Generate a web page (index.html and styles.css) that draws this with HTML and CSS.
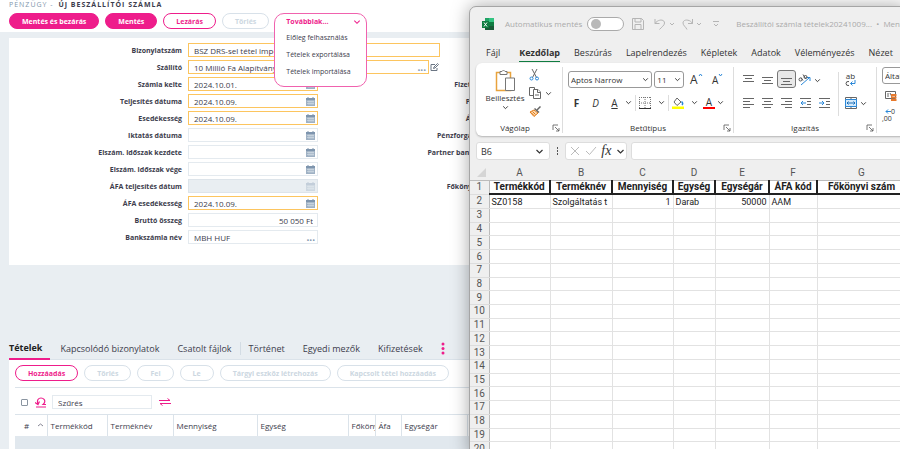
FILE: index.html
```html
<!DOCTYPE html>
<html lang="hu">
<head>
  <meta charset="UTF-8">
  <meta name="viewport" content="width=device-width, initial-scale=1.0">
  <title>Új beszállítói számla</title>
  <link rel="stylesheet" href="styles.css">
</head>
<body>
  <svg class="sprite" aria-hidden="true">
    <symbol id="cal" viewBox="0 0 9 9"><path d="M0 1h9v8H0z" fill="#9fb1c4"/><path d="M0 1h9v2H0z" fill="#7e95ae"/><path d="M2 0v2M7 0v2" stroke="#7e95ae"/><path d="M1 4.500h7M1 6.500h7M3 3.500V8M5 3.500V8M7 3.500V8" stroke="#dfe6ed" stroke-width=".5"/></symbol>
    <symbol id="chev" viewBox="0 0 6 6"><path d="M1 2l2 2 2-2" fill="none" stroke="currentColor" stroke-width=".8"/></symbol>
    <symbol id="launch" viewBox="0 0 8 8"><path d="M1 6V1h5M3 3l4 4M7 4v3H4" fill="none" stroke="#555" stroke-width=".8"/></symbol>
  </svg>

  <main class="erp">
    <header class="erp-header">
      <h1><span>PÉNZÜGY -</span> ÚJ BESZÁLLÍTÓI SZÁMLA</h1>
      <div class="actions">
        <button class="btn solid">Mentés és bezárás</button>
        <button class="btn solid">Mentés</button>
        <button class="btn">Lezárás</button>
        <button class="btn" disabled>Törlés</button>
        <div class="more">
          <div class="more-box">
            <button class="more-toggle">Továbbiak... <svg width="8" height="8"><use href="#chev"/></svg></button>
            <button>Előleg felhasználás</button>
            <button>Tételek exportálása</button>
            <button>Tételek importálása</button>
          </div>
        </div>
      </div>
    </header>

    <form class="card">
      <div class="fields">
        <div class="row"><label for="biz">Bizonylatszám</label><div class="box req wide"><input id="biz" value="BSZ DRS-sel tétel importálás"></div></div>
        <div class="row"><label for="szall">Szállító</label><div class="box req partner"><input id="szall" value="10 Millió Fa Alapítvány"><b class="dots">...</b></div>
          <svg class="edit" width="9" height="9" viewBox="0 0 9 9" fill="none" stroke="#6b7684"><path d="M5 1.500H1v6h6V5"/><path d="M3.500 5.500l.5-1.500L7.500.5l1 1L5 5z"/></svg></div>
        <div class="row"><label for="kelt">Számla kelte</label><div class="box req"><input id="kelt" value="2024.10.01."><svg width="9" height="9"><use href="#cal"/></svg></div></div>
        <div class="row"><label for="telj">Teljesítés dátuma</label><div class="box req"><input id="telj" value="2024.10.09."><svg width="9" height="9"><use href="#cal"/></svg></div></div>
        <div class="row"><label for="esed">Esedékesség</label><div class="box req"><input id="esed" value="2024.10.09."><svg width="9" height="9"><use href="#cal"/></svg></div></div>
        <div class="row"><label for="ikt">Iktatás dátuma</label><div class="box"><input id="ikt"><svg width="9" height="9"><use href="#cal"/></svg></div></div>
        <div class="row"><label for="kezd">Elszám. időszak kezdete</label><div class="box"><input id="kezd"><svg width="9" height="9"><use href="#cal"/></svg></div></div>
        <div class="row"><label for="vege">Elszám. időszak vége</label><div class="box"><input id="vege"><svg width="9" height="9"><use href="#cal"/></svg></div></div>
        <div class="row"><label for="afat">ÁFA teljesítés dátum</label><div class="box off"><input id="afat" disabled><svg width="9" height="9"><use href="#cal"/></svg></div></div>
        <div class="row"><label for="afae">ÁFA esedékesség</label><div class="box req"><input id="afae" value="2024.10.09."><svg width="9" height="9"><use href="#cal"/></svg></div></div>
        <div class="row"><label for="brutto">Bruttó összeg</label><div class="box"><input id="brutto" class="num" value="50 050 Ft"></div></div>
        <div class="row"><label for="bank">Bankszámla név</label><div class="box"><input id="bank" value="MBH HUF"><b class="dots">...</b></div></div>
      </div>
      <div class="fields second">
        <div class="row"></div>
        <div class="row"></div>
        <div class="row"><label for="fiz">Fizetési mód</label><div class="box"><input id="fiz"></div></div>
        <div class="row"><label for="penz">Pénznem</label><div class="box"><input id="penz"></div></div>
        <div class="row"><label for="arf">Árfolyam</label><div class="box"><input id="arf"></div></div>
        <div class="row"><label for="pforg">Pénzforgalmi kód</label><div class="box"><input id="pforg"></div></div>
        <div class="row"><label for="pbank">Partner bankszámla</label><div class="box"><input id="pbank"></div></div>
        <div class="row"></div>
        <div class="row"><label for="fok">Főkönyvi szám</label><div class="box"><input id="fok"></div></div>
      </div>
    </form>

    <nav class="tabs">
      <a href="#" class="active">Tételek</a>
      <a href="#">Kapcsolódó bizonylatok</a>
      <a href="#">Csatolt fájlok</a>
      <i class="sep"></i>
      <a href="#">Történet</a>
      <a href="#">Egyedi mezők</a>
      <a href="#">Kifizetések</a>
      <svg width="4" height="13" viewBox="0 0 4 13" fill="#ee1d8b"><circle cx="2" cy="2" r="1.500"/><circle cx="2" cy="6.500" r="1.500"/><circle cx="2" cy="11" r="1.500"/></svg>
    </nav>

    <section class="panel">
      <div class="panel-bar">
        <button class="btn">Hozzáadás</button>
        <button class="btn" disabled>Törlés</button>
        <button class="btn" disabled>Fel</button>
        <button class="btn" disabled>Le</button>
        <button class="btn" disabled>Tárgyi eszköz létrehozás</button>
        <button class="btn" disabled>Kapcsolt tétel hozzáadás</button>
      </div>
      <div class="filter">
        <input type="checkbox" aria-label="Összes kijelölése">
        <svg width="12" height="11" viewBox="0 0 12 11" fill="none" stroke="#ee1d8b" stroke-width="1.200"><path d="M3 7C1.500 3 3.500 1 6 1s4.500 2 3.500 4.500c-.3 1-1 1.500-1.500 2h3M0 5.500l3 2 1.500-3M1 10h10"/></svg>
        <input type="text" aria-label="Szűrés" value="Szűrés">
        <svg class="swap" width="12" height="8" viewBox="0 0 12 8" fill="none" stroke="#ee1d8b"><path d="M0 2.500h11L8.500.5M12 5.500H1l2.500 2"/></svg>
      </div>
      <table class="items">
        <colgroup><col class="i-no"><col class="i-code"><col class="i-name"><col class="i-qty"><col class="i-unit"><col class="i-acc"><col class="i-vat"><col class="i-price"><col></colgroup>
        <thead>
          <tr><th><span># <svg width="7" height="7" viewBox="0 0 7 7"><path d="M1 4l2.500-2L6 4" fill="none" stroke="#667" stroke-width=".8"/></svg></span></th><th>Termékkód</th><th>Terméknév</th><th>Mennyiség</th><th>Egység</th><th>Főköny</th><th>Áfa</th><th>Egységár</th><th></th></tr>
        </thead>
        <tbody><tr><td colspan="9"></td></tr></tbody>
      </table>
    </section>
  </main>

  <section class="excel">
    <header class="titlebar">
      <svg width="12" height="12" viewBox="0 0 12 12"><path d="M3 0h9v12H3z" fill="#21a366"/><path d="M7 0h5v4H7z" fill="#33c481"/><path d="M3 6h9v6H3z" fill="#185c37"/><path d="M7 4h5v4H7z" fill="#107c41"/><path d="M0 3h7v7H0z" fill="#107c41"/><path d="M2 4.500l3 4M5 4.500l-3 4" stroke="#fff"/></svg>
      <label for="autosave">Automatikus mentés</label>
      <input type="checkbox" class="switch" id="autosave">
      <svg class="save" width="12" height="12" viewBox="0 0 12 12" fill="none" stroke="#b5b5b5"><path d="M.5.5h9l2 2v9H.5zM3 .5V4h6V.5M3 11.500v-5h6v5"/></svg>
      <svg class="undo" width="20" height="12" viewBox="0 0 20 12" fill="none" stroke="#b5b5b5"><path d="M1 1v4.500h4.500M1 5.500C4 1 10.500 1 10.500 5c0 2.500-3 4-5 6.500M16 5l2 2 2-2"/></svg>
      <svg class="redo" width="20" height="12" viewBox="0 0 20 12" fill="none" stroke="#b5b5b5"><path d="M10.500 1v4.500H6M10.500 5.500C8 1 1 1 1 5c0 2.500 3 4 4 6.500M15 5l2 2 2-2"/></svg>
      <svg class="qat" width="6" height="7" viewBox="0 0 6 7" fill="none" stroke="#b5b5b5"><path d="M0 1.500h6M1 4l2 2 2-2"/></svg>
      <p>Beszállítói számla tételek20241009... &nbsp;• &nbsp;Mentve</p>
    </header>

    <nav class="menu">
      <a href="#">Fájl</a>
      <a href="#" class="active">Kezdőlap</a>
      <a href="#">Beszúrás</a>
      <a href="#">Lapelrendezés</a>
      <a href="#">Képletek</a>
      <a href="#">Adatok</a>
      <a href="#">Véleményezés</a>
      <a href="#">Nézet</a>
    </nav>

    <div class="ribbon">
      <div class="group clipboard">
        <div class="tools">
          <button class="paste">
            <svg width="21" height="23" viewBox="0 0 21 23"><path d="M1.500 3.500h14v18h-14z" fill="#fff" stroke="#e8a33d" stroke-width="1.500"/><path d="M5 2.500h2q1.500-3 3 0h2v3H5z" fill="#fff" stroke="#777"/><path d="M10.500 9h9v12.500h-9z" fill="#fff" stroke="#777"/></svg>
            Beillesztés
            <svg width="7" height="7"><use href="#chev"/></svg>
          </button>
          <div class="stack">
            <button aria-label="Kivágás"><svg width="11" height="12" viewBox="0 0 11 12" fill="none"><path d="M3 0l4.500 8.500M8 0L3.500 8.500" stroke="#666"/><circle cx="2.500" cy="9.500" r="1.500" stroke="#2b88d8"/><circle cx="8" cy="9.500" r="1.500" stroke="#2b88d8"/></svg></button>
            <button aria-label="Másolás"><svg width="12" height="12" viewBox="0 0 12 12" fill="#fff" stroke="#666"><path d="M4.500 8.500h-4v-8h5v2"/><path d="M4.500 2.500H9l2.500 2.500v6.500h-7z"/><path d="M8.500 2.500v3h3M6 8h4"/></svg><svg width="7" height="7"><use href="#chev"/></svg></button>
            <button aria-label="Formátummásoló"><svg width="12" height="11" viewBox="0 0 12 11"><path d="M11.500.5L8 4" stroke="#666" stroke-width="1.500"/><path d="M1 6l4-2 4 3-4 3.500z" fill="#fbd9b0" stroke="#e07b1a"/><path d="M2 6.500l3 3M3.500 5.500l3 3" stroke="#e07b1a"/><path d="M5.500 2.500l4.500 4" stroke="#666" stroke-width="1.500"/></svg></button>
          </div>
        </div>
        <footer>Vágólap<svg width="8" height="8"><use href="#launch"/></svg></footer>
      </div>

      <div class="group font">
        <div class="tools lines">
          <div class="line">
            <span class="combo"><select aria-label="Betűtípus"><option>Aptos Narrow</option></select><svg width="7" height="7"><use href="#chev"/></svg></span>
            <span class="combo size"><select aria-label="Betűméret"><option>11</option></select><svg width="7" height="7"><use href="#chev"/></svg></span>
            <button class="grow">A<svg width="5" height="10" viewBox="0 0 5 10"><path d="M1 3l1.500-2L4 3" fill="none" stroke="#2b88d8"/></svg></button>
            <button class="shrink">A<svg width="5" height="10" viewBox="0 0 5 10"><path d="M1 1l1.500 2L4 1" fill="none" stroke="#2b88d8"/></svg></button>
          </div>
          <div class="line styles">
            <button><b>F</b></button>
            <button><i>D</i></button>
            <button><u>A</u></button>
            <svg width="7" height="7"><use href="#chev"/></svg>
            <span class="vr"></span>
            <button aria-label="Szegélyek"><svg width="12" height="12" viewBox="0 0 12 12" fill="none" stroke="#777"><path d="M.5 0v11M11.500 0v11M6 0v11M0 .5h12M0 6h12" stroke-dasharray="1 1"/><path d="M0 11.500h12" stroke="#333"/></svg></button>
            <svg width="7" height="7"><use href="#chev"/></svg>
            <span class="vr"></span>
            <button aria-label="Kitöltőszín"><svg width="12" height="12" viewBox="0 0 12 12"><path d="M5 1l4 4-4 3.500L2 5z" fill="#fff" stroke="#666"/><path d="M9.500 4.500q2 2 .5 3.500" fill="none" stroke="#2b88d8" stroke-width="1.500"/><path d="M0 9.500h12V12H0z" fill="#ff0"/></svg></button>
            <svg width="7" height="7"><use href="#chev"/></svg>
            <button class="color">A</button>
            <svg width="7" height="7"><use href="#chev"/></svg>
          </div>
        </div>
        <footer>Betűtípus<svg width="8" height="8"><use href="#launch"/></svg></footer>
      </div>

      <div class="group align">
        <div class="tools">
          <div class="al-grid">
            <button aria-label="Felülre"><svg width="11" height="12" viewBox="0 0 11 12" stroke="#666"><path d="M0 1.500h11M2 4.500h7M0 7.500h11"/></svg></button>
            <button aria-label="Középre"><svg width="11" height="12" viewBox="0 0 11 12" stroke="#666"><path d="M0 3.500h11M2 6.500h7M0 9.500h11"/></svg></button>
            <button aria-label="Alulra" class="on"><svg width="11" height="12" viewBox="0 0 11 12" stroke="#666"><path d="M0 5.500h11M2 8.500h7M0 11.500h11"/></svg></button>
            <button aria-label="Tájolás" class="orient"><svg width="13" height="12" viewBox="0 0 13 12" fill="none"><path d="M3 11l8-7M8.500 3.500H12V7" stroke="#2b88d8"/><circle cx="2.500" cy="5.500" r="1.500" stroke="#555"/><path d="M3 3.500l2 3M5 .5l3 4.500" stroke="#555"/><circle cx="7.500" cy="3" r="1.500" stroke="#555"/></svg><svg width="7" height="7"><use href="#chev"/></svg></button>
            <span></span>
            <button aria-label="Balra"><svg width="11" height="12" viewBox="0 0 11 12" stroke="#666"><path d="M0 1.500h11M0 4.500h7M0 7.500h11M0 10.500h7"/></svg></button>
            <button aria-label="Középre igazítás"><svg width="11" height="12" viewBox="0 0 11 12" stroke="#666"><path d="M0 1.500h11M2 4.500h7M0 7.500h11M2 10.500h7"/></svg></button>
            <button aria-label="Jobbra"><svg width="11" height="12" viewBox="0 0 11 12" stroke="#666"><path d="M0 1.500h11M4 4.500h7M0 7.500h11M4 10.500h7"/></svg></button>
            <button aria-label="Behúzás csökkentése"><svg width="11" height="12" viewBox="0 0 11 12" fill="none" stroke="#666"><path d="M0 1.500h11M7 4.500h4M7 7.500h4M0 10.500h11"/><path d="M6 6H1M3 4L1 6l2 2" stroke="#2b88d8"/></svg></button>
            <button aria-label="Behúzás növelése"><svg width="11" height="12" viewBox="0 0 11 12" fill="none" stroke="#666"><path d="M0 1.500h11M7 4.500h4M7 7.500h4M0 10.500h11"/><path d="M0 6h5M3 4l2 2-2 2" stroke="#2b88d8"/></svg></button>
          </div>
          <span class="vr tall"></span>
          <div class="wrap">
            <button aria-label="Sortöréssel több sorba">ab<svg width="11" height="7" viewBox="0 0 11 7" fill="none"><path d="M4 1.500Q1 1 1 3.500T4 5.500" stroke="#555"/><path d="M10 0v3.500H5.500M7.500 1.500l-2 2 2 2" stroke="#2b88d8"/></svg></button>
            <button aria-label="Cellaegyesítés" class="merge"><svg width="12" height="12" viewBox="0 0 12 12" fill="none" stroke="#666"><path d="M.5.5h11v11H.5zM6 0v2.500M6 9.500V12"/><path d="M.5 2.500h11v7H.5z" fill="#d6eafa" stroke="#2b88d8"/><path d="M2 6h8M3.500 4.500L2 6l1.500 1.500M8.500 4.500L10 6 8.500 7.500" stroke="#1b6fb8"/></svg><svg width="7" height="7"><use href="#chev"/></svg></button>
          </div>
        </div>
        <footer>Igazítás<svg width="8" height="8"><use href="#launch"/></svg></footer>
      </div>

      <div class="group number">
        <select aria-label="Számformátum"><option>Általános</option></select>
        <svg width="12" height="12" viewBox="0 0 12 12" fill="none" stroke="#666"><path d="M.5 1.500h10v7H.5zM3 3v4M5 3l2 4"/><path d="M6 5h5.500M6 7.500h5.500M6 10h5.500" stroke="#e8792b" stroke-width="2"/></svg>
        <span class="dec"><svg width="6" height="5" viewBox="0 0 6 5" fill="none" stroke="#2b88d8"><path d="M6 2.500H1M3 .5l-2 2 2 2"/></svg>0<br>,00</span>
      </div>
    </div>

    <div class="formula">
      <span class="combo name"><input aria-label="Név mező" value="B6"><svg width="9" height="9"><use href="#chev"/></svg></span>
      <svg width="3" height="9" viewBox="0 0 3 9" fill="#555"><path d="M1 0h1v2H1zM1 3h1v2H1zM1 6h1v2H1z"/></svg>
      <div class="fx">
        <svg width="10" height="10" viewBox="0 0 10 10" stroke="#bbb"><path d="M1 1l8 8M9 1L1 9"/></svg>
        <svg width="12" height="10" viewBox="0 0 12 10" fill="none" stroke="#bbb"><path d="M1 5l3.500 3.500L11 1"/></svg>
        <em>fx</em>
        <svg width="9" height="9"><use href="#chev"/></svg>
      </div>
      <input class="fbar" aria-label="Szerkesztőléc">
    </div>

    <table class="sheet">
      <colgroup><col class="c-row"><col class="c-a"><col class="c-b"><col class="c-a"><col class="c-d"><col class="c-e"><col class="c-f"><col></colgroup>
      <thead>
        <tr><th><svg width="9" height="9" viewBox="0 0 9 9"><path d="M9 0v9H0z" fill="#d5d5d5"/></svg></th><th>A</th><th>B</th><th>C</th><th>D</th><th>E</th><th>F</th><th>G</th></tr>
      </thead>
      <tbody>
        <tr class="heads"><th>1</th><td>Termékkód</td><td>Terméknév</td><td>Mennyiség</td><td>Egység</td><td>Egységár</td><td>ÁFA kód</td><td>Főkönyvi szám</td></tr>
        <tr><th>2</th><td>SZ0158</td><td>Szolgáltatás t</td><td class="num">1</td><td>Darab</td><td class="num">50000</td><td>AAM</td><td></td></tr>
        <tr><th>3</th><td></td><td></td><td></td><td></td><td></td><td></td><td></td></tr>
        <tr><th>4</th><td></td><td></td><td></td><td></td><td></td><td></td><td></td></tr>
        <tr><th>5</th><td></td><td></td><td></td><td></td><td></td><td></td><td></td></tr>
        <tr><th>6</th><td></td><td></td><td></td><td></td><td></td><td></td><td></td></tr>
        <tr><th>7</th><td></td><td></td><td></td><td></td><td></td><td></td><td></td></tr>
        <tr><th>8</th><td></td><td></td><td></td><td></td><td></td><td></td><td></td></tr>
        <tr><th>9</th><td></td><td></td><td></td><td></td><td></td><td></td><td></td></tr>
        <tr><th>10</th><td></td><td></td><td></td><td></td><td></td><td></td><td></td></tr>
        <tr><th>11</th><td></td><td></td><td></td><td></td><td></td><td></td><td></td></tr>
        <tr><th>12</th><td></td><td></td><td></td><td></td><td></td><td></td><td></td></tr>
        <tr><th>13</th><td></td><td></td><td></td><td></td><td></td><td></td><td></td></tr>
        <tr><th>14</th><td></td><td></td><td></td><td></td><td></td><td></td><td></td></tr>
        <tr><th>15</th><td></td><td></td><td></td><td></td><td></td><td></td><td></td></tr>
        <tr><th>16</th><td></td><td></td><td></td><td></td><td></td><td></td><td></td></tr>
        <tr><th>17</th><td></td><td></td><td></td><td></td><td></td><td></td><td></td></tr>
        <tr><th>18</th><td></td><td></td><td></td><td></td><td></td><td></td><td></td></tr>
        <tr><th>19</th><td></td><td></td><td></td><td></td><td></td><td></td><td></td></tr>
        <tr><th>20</th><td></td><td></td><td></td><td></td><td></td><td></td><td></td></tr>
      </tbody>
    </table>
  </section>
</body>
</html>
```

FILE: styles.css
```css
* {
  box-sizing: border-box;
}

body {
  margin: 0;
  height: 100vh;
  overflow: hidden;
  position: relative;
  background: #e9eef2;
  color: #3c3c4c;
  font-family: "Open Sans", "Noto Sans", sans-serif;
  font-size: 7px;
}

button, input, select {
  font: inherit;
  color: inherit;
  background: none;
  border: 0;
  margin: 0;
  padding: 0;
  outline: 0;
}

button {
  white-space: nowrap;
  cursor: pointer;
}

a {
  color: inherit;
  text-decoration: none;
}

svg {
  flex: none;
}

.sprite {
  position: absolute;
  width: 0;
  height: 0;
}

/* ---------- ERP ---------- */
.erp {
  display: flex;
  flex-direction: column;
  min-height: 100vh;
}

.erp-header {
  height: 32px;
  padding-left: 9px;
  background: #fff;
}

h1 {
  margin: 0;
  font-size: 7px;
  line-height: 10px;
  letter-spacing: 1px;
  padding-bottom: 3px;
}

h1 span {
  font-weight: normal;
  color: #8296ac;
  margin-right: 2px;
}

.actions {
  display: flex;
  gap: 6px;
}

.btn {
  height: 16px;
  padding: 0 12px;
  border: 1px solid #ee1d8b;
  border-radius: 8px;
  background: #fff;
  color: #ee1d8b;
  font-weight: bold;
}

.btn.solid {
  background: #ee1d8b;
  color: #fff;
}

.btn:disabled {
  border-color: #d8e1e9;
  color: #ccd7e1;
}

.more {
  width: 93px;
  margin-left: -1px;
  position: relative;
}

/* opened menu lies over the form */
.more-box {
  position: absolute;
  z-index: 1;
  top: 0;
  left: 0;
  right: 0;
  display: flex;
  flex-direction: column;
  padding: 0 5px 6px 11px;
  border: 1px solid #f062ae;
  border-radius: 10px;
  background: #fff;
}

.more-box button {
  height: 17px;
  text-align: left;
}

.more-box .more-toggle {
  display: flex;
  align-items: center;
  justify-content: space-between;
  height: 15px;
  color: #ee1d8b;
  font-weight: bold;
}

.card {
  display: flex;
  margin: 6px 0 0 9px;
  padding: 5px 0 21px;
  background: #fff;
}

.fields {
  flex: none;
  display: flex;
  flex-direction: column;
  gap: 3px;
  width: 316px;
}

.row {
  display: flex;
  align-items: center;
  gap: 6px;
  height: 14px;
}

.row label {
  flex: none;
  width: 173px;
  text-align: right;
  font-weight: bold;
}

.box {
  flex: none;
  display: flex;
  align-items: center;
  width: 130px;
  height: 14px;
  padding: 0 2px 0 5px;
  border: 1px solid #e4eaef;
  background: #fff;
  font-size: 8px;
}

.box input {
  flex: 1;
  min-width: 0;
  height: 12px;
}

.box.req {
  border-color: #fcc55f;
}

.box.off {
  background: #e9eef2;
  border-color: #dde4ea;
}

.box.off svg {
  opacity: .35;
}

.box.wide {
  width: 252px;
}

.box.partner {
  width: 241px;
}

.edit {
  margin-left: -5px;
}

.dots {
  color: #7e95ae;
  font-size: 10px;
  line-height: 8px;
}

.num {
  text-align: right;
}

.box .num {
  padding-right: 2px;
}

.tabs {
  display: flex;
  align-items: center;
  gap: 18px;
  height: 22px;
  margin: 73px 0 0 9px;
  font-size: 9px;
  border-bottom: 1px solid #dbe3ea;
}

.tabs a {
  line-height: 18px;
}

.tabs .active {
  font-weight: bold;
  color: #222;
  padding-right: 8px;
  margin-right: -8px;
  border-bottom: 2px solid #ee1d8b;
  line-height: 20px;
}

.tabs .sep {
  width: 1px;
  height: 13px;
  margin: 0 -10px;
  background: #d3dce4;
}

.panel {
  flex: 1;
  margin-left: 9px;
  padding-left: 6px;
  background: #fff;
}

.panel-bar {
  display: flex;
  gap: 6px;
  padding: 5px 0 6px;
  border-bottom: 1px solid #dbe3ea;
}

.filter {
  display: flex;
  align-items: center;
  gap: 7px;
  height: 27px;
  padding: 2px 0 0 6px;
  border-bottom: 1px solid #dbe3ea;
  font-size: 8px;
}

.filter [type=checkbox] {
  appearance: none;
  width: 7px;
  height: 7px;
  border: 1px solid #8a95a1;
  border-radius: 1px;
}

.filter [type=text] {
  width: 100px;
  height: 14px;
  padding: 0 5px;
  border: 1px solid #e4eaef;
  margin-left: -2px;
}

.items {
  width: 100%;
  table-layout: fixed;
  border-collapse: collapse;
  font-size: 8px;
}

.items th {
  height: 21px;
  padding: 0 0 0 3px;
  border-right: 1px solid #dbe3ea;
  font-weight: normal;
  text-align: left;
  overflow: hidden;
  white-space: nowrap;
}

.items th:first-child {
  padding: 0 3px 0 9px;
}

.items th span {
  display: flex;
  justify-content: space-between;
  align-items: center;
}

.items td {
  height: 14px;
  background: #e1e8ee;
}

.i-no { width: 32px; }
.i-code { width: 60px; }
.i-name { width: 66px; }
.i-qty { width: 84px; }
.i-unit { width: 91px; }
.i-acc { width: 27px; }
.i-vat { width: 26px; }
.i-price { width: 66px; }

/* ---------- Excel window over the ERP page ---------- */
.excel {
  position: absolute;
  z-index: 2;
  left: 469px;
  right: -8px;
  top: 6px;
  bottom: -9px;
  overflow: hidden;
  border: 1px solid #a5a5a5;
  border-radius: 7px;
  background: #efefef;
  box-shadow: 0 0 18px rgba(0, 0, 0, .35);
  color: #333;
  font-size: 8px;
}

.titlebar {
  display: flex;
  align-items: center;
  height: 33px;
  padding: 0 0 0 12px;
  color: #aaa;
  white-space: nowrap;
}

.titlebar label {
  margin: 0 5px 0 11px;
}

.titlebar p {
  margin: 0 0 0 17px;
}

.switch {
  appearance: none;
  display: flex;
  align-items: center;
  flex: none;
  width: 37px;
  height: 14px;
  padding: 0 3px;
  border: 1px solid #aaa;
  border-radius: 7px;
  background: #fff;
}

.switch::before {
  content: "";
  width: 10px;
  height: 10px;
  border-radius: 50%;
  background: #b9b9b9;
}

.save { margin-left: 8px; }
.undo { margin-left: 10px; }
.redo { margin-left: 8px; }
.qat { margin-left: 11px; }

.menu {
  display: flex;
  gap: 14px;
  height: 23px;
  padding: 4px 0 0 16px;
  font-size: 9px;
  line-height: 17px;
  white-space: nowrap;
}

.menu a {
  height: 18px;
}

.menu .active {
  margin-left: 5px;
  font-weight: bold;
  border-bottom: 1px solid #107c41;
}

.ribbon {
  display: flex;
  height: 73px;
  margin-left: 6px;
  border-radius: 6px;
  background: #fff;
  box-shadow: 0 1px 2px rgba(0, 0, 0, .25);
}

.group {
  flex: none;
  display: flex;
  flex-direction: column;
  justify-content: space-between;
  margin: 4px 0 3px;
  border-right: 1px solid #ddd;
}

.clipboard { width: 87px; }
.font { width: 171px; }
.align { width: 143px; }

.tools {
  display: flex;
  padding: 2px 5px 0;
}

.group footer {
  display: flex;
  justify-content: center;
  align-items: center;
  position: relative;
  line-height: 10px;
}

.clipboard footer {
  padding-right: 8px;
}

.group footer svg {
  position: absolute;
  right: 2px;
}

.paste {
  display: flex;
  flex-direction: column;
  align-items: center;
  width: 48px;
  line-height: 12px;
}

.stack {
  display: flex;
  flex-direction: column;
  gap: 6px;
}

.stack button {
  display: flex;
  align-items: center;
  gap: 4px;
  height: 12px;
}

.lines {
  flex-direction: column;
  gap: 6px;
  padding-top: 4px;
}

.line {
  display: flex;
  align-items: center;
  gap: 2px;
  height: 17px;
}

.combo {
  display: flex;
  align-items: center;
  width: 89px;
  height: 17px;
  padding: 0 2px;
  border: 1px solid #999;
  border-radius: 3px;
  background: #fff;
}

.combo select, .combo input {
  flex: 1;
  min-width: 0;
  appearance: none;
}

.combo.size {
  width: 31px;
}

.line button {
  width: 17px;
  text-align: center;
  font-size: 10px;
}

.line .grow, .line .shrink {
  display: flex;
  font-size: 12px;
  line-height: 14px;
  margin-left: 4px;
}

.line .shrink {
  font-size: 10px;
}

.styles .vr {
  margin: 0 1px;
}

.vr {
  width: 1px;
  height: 16px;
  background: #ddd;
}

.vr.tall {
  height: 44px;
  margin: 3px 6px 0 4px;
}

.line .color {
  width: 12px;
  height: 13px;
  margin-left: 3px;
  line-height: 10px;
  border-bottom: 2px solid #f00;
}

.line.styles svg {
  display: block;
}

.al-grid {
  display: grid;
  grid-template-columns: repeat(5, 19px);
  grid-template-rows: 20px 20px;
  row-gap: 3px;
  padding-top: 1px;
}

.al-grid button {
  display: flex;
  align-items: center;
  justify-content: center;
}

.al-grid .on {
  height: 18px;
  border: 1px solid #777;
  border-radius: 3px;
  background: #e8e8e8;
}

.al-grid .orient {
  justify-content: flex-start;
  gap: 3px;
  padding-left: 2px;
}

.wrap {
  display: flex;
  flex-direction: column;
  align-items: flex-start;
  gap: 10px;
  padding-top: 3px;
}

.wrap button {
  display: flex;
  flex-direction: column;
  align-items: center;
  line-height: 8px;
}

.wrap .merge {
  flex-direction: row;
  gap: 3px;
}

.number {
  flex: 1;
  min-width: 0;
  justify-content: flex-start;
  align-items: flex-start;
  gap: 6px;
  padding-left: 5px;
  border: 0;
}

.number select {
  appearance: none;
  width: 100%;
  height: 17px;
  padding-left: 2px;
  border: 1px solid #999;
  border-radius: 3px;
}

.number svg {
  margin-left: 3px;
}

.dec {
  font-size: 7px;
  line-height: 7px;
}

.formula {
  display: flex;
  align-items: center;
  gap: 6px;
  height: 30px;
  padding-left: 6px;
}

.formula .combo, .fx, .fbar {
  height: 18px;
  border: 1px solid #ddd;
  border-radius: 3px;
  background: #fff;
}

.formula .name {
  width: 74px;
  padding: 0 5px 0 4px;
  font-size: 9px;
}

.fx {
  display: flex;
  align-items: center;
  justify-content: space-between;
  width: 62px;
  padding: 0 1px 0 4px;
}

.fx em {
  font-family: "Liberation Serif", serif;
  font-size: 14px;
}

.fbar {
  flex: 1;
  margin-left: -2px;
}

.sheet {
  width: 100%;
  height: 290px;
  table-layout: fixed;
  border-collapse: collapse;
  font-family: Roboto, "Liberation Sans", sans-serif;
  font-size: 9px;
  line-height: 12px;
}

.sheet th, .sheet td {
  padding: 0 2px;
  overflow: hidden;
  white-space: nowrap;
}

.sheet th {
  padding: 0;
  font-size: 10px;
  font-weight: normal;
  color: #555;
}

.sheet thead th {
  height: 14px;
  border-bottom: 1px solid #bbb;
}

.sheet thead svg {
  display: block;
  margin-left: 7px;
}

.sheet tbody th {
  border-right: 1px solid #bbb;
  border-bottom: 1px solid #ddd;
}

.sheet td {
  border: 1px solid #e2e2e2;
  background: #fff;
  color: #222;
}

.sheet .heads td {
  border-right: 2px solid #222;
  border-bottom: 2px solid #222;
  text-align: center;
  font-size: 10px;
  font-weight: bold;
}

.c-row { width: 19px; }
.c-a { width: 61px; }
.c-b { width: 62px; }
.c-d { width: 42px; }
.c-e { width: 54px; }
.c-f { width: 48px; }
```
